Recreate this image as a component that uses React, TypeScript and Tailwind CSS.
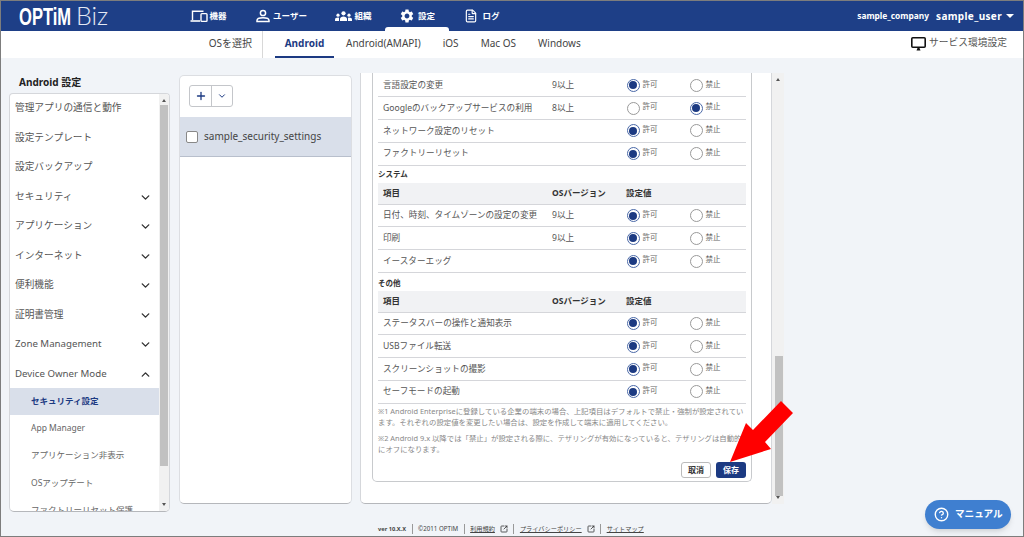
import React from "react";
import { ChevronDown, ChevronUp, Plus, FileText, CircleHelp, SquareArrowOutUpRight } from "lucide-react";
import { MdSettings } from "react-icons/md";

const F = '"Noto Sans","Noto Sans CJK JP",sans-serif';

function DeviceIcon() {
  return (
    <svg width="18" height="13" viewBox="0 0 18 13" fill="none" stroke="white" strokeWidth="1.4">
      <path d="M2.5 10V1.2H13.5" />
      <path d="M0.5 11H10" strokeWidth="1.6" />
      <rect x="11" y="3.6" width="6" height="7.8" rx="0.8" />
    </svg>
  );
}
function UserIcon() {
  return (
    <svg width="14" height="14" viewBox="0 0 14 14" fill="none" stroke="white" strokeWidth="1.5">
      <circle cx="7" cy="4" r="2.6" />
      <path d="M1 12.6V11.4C1 9.8 3.6 8.8 7 8.8S13 9.8 13 11.4V12.6Z" />
    </svg>
  );
}
function GroupIcon() {
  return (
    <svg width="17" height="11" viewBox="0 0 17 11" fill="white">
      <circle cx="8.5" cy="2.3" r="2.1" />
      <path d="M5 10V8C5 6.4 6.6 5.5 8.5 5.5S12 6.4 12 8V10Z" />
      <circle cx="3" cy="4.2" r="1.6" />
      <path d="M0 10V8.4C0 7.3 1.3 6.6 3 6.6L4 6.8V10Z" />
      <circle cx="14" cy="4.2" r="1.6" />
      <path d="M17 10V8.4C17 7.3 15.7 6.6 14 6.6L13 6.8V10Z" />
    </svg>
  );
}
function MonitorIcon() {
  return (
    <svg width="15" height="14" viewBox="0 0 15 14">
      <rect x="0.8" y="0.8" width="13.4" height="9.4" rx="1" fill="#fff" stroke="#111" strokeWidth="1.6" />
      <path d="M5.5 13.4L6.5 11H8.5L9.5 13.4Z" fill="#111" />
    </svg>
  );
}
function Radio({ on, label, w }: { on: boolean; label: string; w: string }) {
  return (
    <div className={`flex items-center ${w}`}>
      <span className={`flex items-center justify-center w-[13px] h-[13px] rounded-full bg-white border ${on ? "border-[#4a69a8]" : "border-[#9a9a9a]"}`}>
        {on && <span className="block w-[8px] h-[8px] rounded-full bg-[#1c3a82]" />}
      </span>
      <span className="ml-[3px] -mt-[2px] text-[7.5px] leading-none text-[#666]">{label}</span>
    </div>
  );
}
function Row({ name, ver, on = true }: { name: string; ver?: string; on?: boolean }) {
  return (
    <div className="flex items-center h-[22.8px] border-b-[1.5px] border-[#d5d6da] pl-[5px] text-[#555] text-[8.6px]">
      <div className="w-[169px] whitespace-nowrap">{name}</div>
      <div className="w-[74.5px]">{ver}</div>
      <Radio on={on} label="許可" w="w-[63px]" />
      <Radio on={!on} label="禁止" w="w-[50px]" />
    </div>
  );
}
function Head() {
  return (
    <div className="flex items-center h-[22px] bg-[#f1f2f4] border-b-[1.5px] border-[#d5d6da] pl-[5px] text-[#333] text-[8.5px] font-bold">
      <div className="w-[169px]">項目</div>
      <div className="w-[74px]">OSバージョン</div>
      <div>設定値</div>
    </div>
  );
}
function Side({ t, chev }: { t: string; chev?: "d" | "u" }) {
  return (
    <div className="flex items-center justify-between h-[29.5px] pl-[5px] pr-[7px] text-[#555] text-[9.7px] whitespace-nowrap">
      <span>{t}</span>
      {chev === "d" && <ChevronDown size={13} strokeWidth={2.6} color="#333" />}
      {chev === "u" && <ChevronUp size={13} strokeWidth={2.6} color="#333" />}
    </div>
  );
}
function Sub({ t, on }: { t: string; on?: boolean }) {
  return (
    <div className={`flex items-center h-[27.3px] pl-[21px] text-[8.5px] whitespace-nowrap ${on ? "bg-[#d9dfea] text-[#1c3a82] font-bold" : "text-[#666]"}`}>{t}</div>
  );
}
function Scroll({ thumbH, thumbTop, w, thumb }: { thumbH: number; thumbTop: number; w: string; thumb: string }) {
  return (
    <div className={`relative shrink-0 bg-[#f1f1f1] ${w}`}>
      <span className="absolute top-[5px] left-1/2 -translate-x-1/2 w-0 h-0 border-x-[2.5px] border-x-transparent border-b-[3px] border-b-[#555]" />
      <span className="absolute bottom-[5px] left-1/2 -translate-x-1/2 w-0 h-0 border-x-[2.5px] border-x-transparent border-t-[3px] border-t-[#555]" />
      <span className={`absolute bg-[#c1c1c1] ${thumb}`} style={{ top: thumbTop, height: thumbH }} />
    </div>
  );
}
function NavItem({ w, gap, icon, t, active }: { w: string; gap: string; icon: React.ReactNode; t: string; active?: boolean }) {
  return (
    <div className={`relative flex items-center justify-center h-full text-white text-[8.5px] font-bold ${w} ${gap}`}>
      {icon}
      <span>{t}</span>
      {active && <span className="absolute bottom-0 left-0 right-0 h-[4px] bg-white rounded-t-[3px]" />}
    </div>
  );
}
function Sep() {
  return <span className="h-[10px] border-l border-[#999] mx-[5.5px]" />;
}
function FootLink({ t, ext }: { t: string; ext?: boolean }) {
  return (
    <>
      <Sep />
      <span className="underline">{t}</span>
      {ext && <SquareArrowOutUpRight size={8} strokeWidth={2.4} color="#333" className="ml-[5px]" />}
    </>
  );
}

export default function App() {
  return (
    <div className="relative w-[1024px] h-[537px] overflow-hidden border border-[#7d7d7d] bg-[#f1f4f8] flex flex-col" style={{ fontFamily: F }}>
      <header className="shrink-0 h-[30px] bg-[#1e3f87] flex items-center text-white">
        <div className="w-[175px] pl-[18px] flex items-baseline">
          <span className="inline-block w-[49px] text-[23px] font-bold leading-none font-['Liberation_Sans'] origin-left scale-x-[0.72] whitespace-nowrap">OPTiM</span>
          <span className="ml-[8px] text-[25px] font-light leading-none font-['Lato'] text-[#e4e9f4]">Biz</span>
        </div>
        <div className="flex h-full items-center">
          <NavItem w="w-[65px]" gap="gap-[1px]" icon={<DeviceIcon />} t="機器" />
          <NavItem w="w-[81px]" gap="gap-[3px]" icon={<UserIcon />} t="ユーザー" />
          <NavItem w="w-[63px]" gap="gap-[2px]" icon={<GroupIcon />} t="組織" />
          <NavItem w="w-[64px]" gap="gap-[3px]" active icon={<MdSettings size={16} color="white" />} t="設定" />
          <NavItem w="w-[66px]" gap="gap-[4px]" icon={<FileText size={14} color="white" strokeWidth={2} />} t="ログ" />
        </div>
        <div className="ml-auto pr-[9px] flex items-center font-bold">
          <span className="text-[8.4px]">sample_company</span>
          <span className="ml-[7px] text-[10px] tracking-[0.35px]">sample_user</span>
          <span className="ml-[4px] w-0 h-0 border-x-[4px] border-x-transparent border-t-[4px] border-t-white" />
        </div>
      </header>

      <nav className="shrink-0 h-[27px] pb-[2px] bg-white flex items-center text-[10px] text-[#444]">
        <div className="w-[251px] text-right">OSを選択</div>
        <div className="ml-[10px] self-stretch -mb-[2px] border-l-[1.5px] border-[#d8d8d8]" />
        <div className="ml-[12px] relative w-[59px] self-stretch flex items-center justify-center font-bold text-[#1c3a82]">
          Android
          <span className="absolute -bottom-[2px] left-0 right-0 h-[2px] bg-[#1c3a82]" />
        </div>
        <span className="ml-[12px]">Android(AMAPI)</span>
        <span className="ml-[22px]">iOS</span>
        <span className="ml-[22px]">Mac OS</span>
        <span className="ml-[22px]">Windows</span>
        <div className="ml-auto pr-[16px] flex items-center gap-[3px] text-[#555] text-[9.75px]">
          <MonitorIcon />
          <span>サービス環境設定</span>
        </div>
      </nav>

      <div className="flex-1 flex items-start pl-[8px] pt-[15px] min-h-0">
        <div className="w-[161px] shrink-0">
          <div className="h-[20px] pl-[10px] pb-[2px] flex items-center text-[10px] font-bold text-[#222]">Android 設定</div>
          <div className="flex h-[419px] rounded-b-[5px] rounded-t-[4px] overflow-hidden bg-white border border-[#d5d7db] border-b-[#b5b7bb]">
            <div className="flex-1 min-w-0 overflow-hidden">
              <Side t="管理アプリの通信と動作" />
              <Side t="設定テンプレート" />
              <Side t="設定バックアップ" />
              <Side t="セキュリティ" chev="d" />
              <Side t="アプリケーション" chev="d" />
              <Side t="インターネット" chev="d" />
              <Side t="便利機能" chev="d" />
              <Side t="証明書管理" chev="d" />
              <Side t="Zone Management" chev="d" />
              <Side t="Device Owner Mode" chev="u" />
              <div className="-mt-[1.5px]">
                <Sub t="セキュリティ設定" on />
                <Sub t="App Manager" />
                <Sub t="アプリケーション非表示" />
                <Sub t="OSアップデート" />
                <Sub t="ファクトリーリセット保護" />
              </div>
            </div>
            <Scroll w="w-[10px]" thumbTop={11} thumbH={361} thumb="left-[1px] right-[1px]" />
          </div>
        </div>

        <div className="ml-[9px] mt-[2px] w-[173px] h-[429px] shrink-0 rounded-[5px] bg-white border border-[#dcdee2] border-b-[#b5b7bb] flex flex-col">
          <div className="h-[41px] pl-[9px] pt-[9px]">
            <div className="flex w-[44px] h-[22px] border border-[#c4c6ca] rounded-[3px] bg-white">
              <div className="w-[22px] flex items-center justify-center border-r border-[#c4c6ca]"><Plus size={12} strokeWidth={2.6} color="#1c3a82" /></div>
              <div className="flex-1 flex items-center justify-center"><ChevronDown size={10} strokeWidth={2.4} color="#1c3a82" /></div>
            </div>
          </div>
          <div className="h-[40px] bg-[#d9dfea] border-b border-[#b8bfcc] flex items-center pl-[6px] text-[10px] text-[#444]">
            <span className="w-[12px] h-[12px] rounded-[2px] border border-[#888] bg-white mr-[6px]" />
            sample_security_settings
          </div>
        </div>

        <div className="ml-[8px] flex h-[431px] shrink-0">
          <div className="w-[412px] h-full bg-white border-x border-b border-[#d5d7db] border-b-[#b5b7bb] rounded-b-[5px] pl-[11px] pr-[19px]">
            <div className="h-[409px] border-x border-b border-[#c8cacd] rounded-b-[5px] px-[5px] pt-[1.5px]">
              <Row name="言語設定の変更" ver="9以上" />
              <Row name="Googleのバックアップサービスの利用" ver="8以上" on={false} />
              <Row name="ネットワーク設定のリセット" />
              <Row name="ファクトリーリセット" />
              <div className="h-[17px] flex items-end pb-[2px] text-[7.5px] font-bold text-[#333]">システム</div>
              <Head />
              <Row name="日付、時刻、タイムゾーンの設定の変更" ver="9以上" />
              <Row name="印刷" ver="9以上" />
              <Row name="イースターエッグ" />
              <div className="h-[17.5px] flex items-end pb-[1px] text-[7.5px] font-bold text-[#333]">その他</div>
              <Head />
              <Row name="ステータスバーの操作と通知表示" />
              <Row name="USBファイル転送" />
              <Row name="スクリーンショットの撮影" />
              <Row name="セーフモードの起動" />
              <div className="pt-[2.5px] text-[7.4px] leading-[11px] text-[#888] whitespace-nowrap">
                <p>※1 Android Enterpriseに登録している企業の端末の場合、上記項目はデフォルトで禁止・強制が設定されてい</p>
                <p>ます。それぞれの設定値を変更したい場合は、設定を作成して端末に適用してください。</p>
                <p className="mt-[5px]">※2 Android 9.x 以降では「禁止」が設定される際に、テザリングが有効になっていると、テザリングは自動的</p>
                <p>にオフになります。</p>
              </div>
              <div className="mt-[7px] flex justify-end gap-[5px] text-[8px] font-bold">
                <span className="w-[30px] h-[16px] flex items-center justify-center rounded-[3px] bg-white border border-[#bbb] text-[#333]">取消</span>
                <span className="w-[30px] h-[16px] flex items-center justify-center rounded-[3px] bg-[#1c3a82] text-white">保存</span>
              </div>
            </div>
          </div>
          <Scroll w="w-[12px]" thumbTop={283} thumbH={140} thumb="left-[3px] right-[1px]" />
        </div>
      </div>

      <footer className="absolute left-[377px] bottom-[1px] flex items-center text-[6.2px] text-[#444] h-[12px]">
        <span className="font-bold text-[5.7px]">ver 10.X.X</span>
        <Sep />
        <span>©2011 OPTiM</span>
        <FootLink t="利用規約" ext />
        <FootLink t="プライバシーポリシー" ext />
        <FootLink t="サイトマップ" />
      </footer>

      <div className="absolute left-[924px] top-[499px] w-[86px] h-[29px] rounded-full bg-[#3f7fd0] shadow-md flex items-center pl-[9px] gap-[6px] text-white text-[9.6px] font-bold">
        <CircleHelp size={15} strokeWidth={2.2} color="white" />
        マニュアル
      </div>

      <svg className="absolute -left-px -top-px pointer-events-none" width="1024" height="537">
        <polygon points="730,462 746,423 753,430 781,401 793,413 765,442 771,449" fill="#ff0000" />
      </svg>
    </div>
  );
}
